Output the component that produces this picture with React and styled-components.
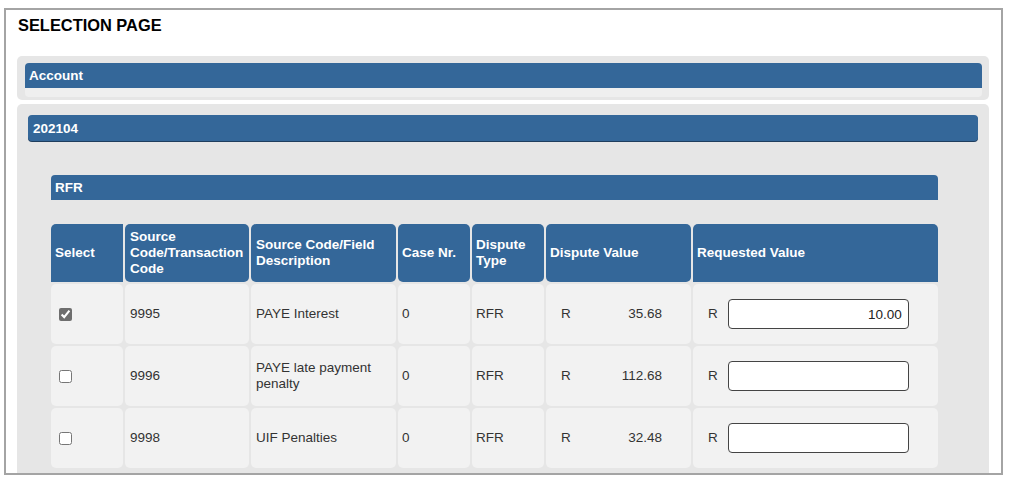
import React from "react";
import styled, { createGlobalStyle } from "styled-components";

const Global = createGlobalStyle`
  html, body { margin: 0; padding: 0; background: #fff; }
  body { font-family: "Liberation Sans", Arial, sans-serif; }
`;

const BLUE = "#346799";

const Frame = styled.div`
  box-sizing: border-box;
  margin: 8px 0 0 4px;
  width: 999px;
  height: 467px;
  border: 2px solid #a4a4a4;
  background: #fff;
  overflow: hidden;
  padding: 0 12px 0 11px;
`;

const Title = styled.h1`
  margin: 0;
  padding: 6px 0 0 1px;
  font-size: 16.4px;
  line-height: 18px;
  font-weight: bold;
  color: #000;
`;

const Panel = styled.div`
  background: #e6e6e6;
  border-radius: 5px;
  margin-top: ${(p) => p.$mt}px;
  padding: ${(p) => p.$pad};
`;

const Card = styled.div`
  background: #efefef;
  border-radius: 4px;
  padding-bottom: 9px;
`;

const Bar = styled.div`
  box-sizing: border-box;
  height: ${(p) => p.$h || 25}px;
  background: ${BLUE};
  color: #fff;
  font-weight: bold;
  font-size: 13.5px;
  display: flex;
  align-items: center;
  padding-left: ${(p) => p.$pl || 4}px;
  border-radius: ${(p) => p.$radius || "4px 4px 0 0"};
  box-shadow: ${(p) => (p.$shadow ? "0 1px 0 #1f3e5e" : "none")};
  margin: ${(p) => p.$margin || "0"};
`;

const Section = styled.div`
  margin: 34px 0 0 34px;
  width: 887px;
`;

const Grid = styled.div`
  margin-top: 24px;
  display: grid;
  grid-template-columns: 72px 124px 145px 72px 72px 145px 245px;
  grid-auto-rows: 60px;
  grid-template-rows: 58px;
  gap: 2px;
  font-size: 13.5px;
`;

const Head = styled.div`
  background: ${BLUE};
  color: #fff;
  font-weight: bold;
  line-height: 16px;
  display: flex;
  align-items: center;
  padding: 0 0 0 ${(p) => p.$pl || 4}px;
  white-space: nowrap;
  border-radius: ${(p) => p.$radius || "5px"};
`;

const Cell = styled.div`
  background: #f2f2f2;
  color: #333;
  line-height: 16px;
  border-radius: 5px;
  display: flex;
  align-items: center;
  white-space: nowrap;
  padding: ${(p) => p.$pad || "0 0 0 5px"};
  justify-content: ${(p) => p.$justify || "flex-start"};
`;

const Check = styled.input.attrs({ type: "checkbox" })`
  width: 13px;
  height: 13px;
  margin: 0 0 0 3px;
  accent-color: #6e6e6e;
`;

const Amount = styled.span`
  text-align: right;
`;

const Currency = styled.span`
  margin-right: 10px;
`;

const ValueInput = styled.input`
  box-sizing: border-box;
  width: 181px;
  height: 30px;
  border: 1.5px solid #444;
  border-radius: 4px;
  background: #fff;
  text-align: right;
  padding: 0 6px;
  font: 13.5px "Liberation Sans", Arial, sans-serif;
  color: #222;
  outline: none;
`;

const rows = [
  { checked: true, code: "9995", desc: ["PAYE Interest"], value: "35.68", req: "10.00" },
  { checked: false, code: "9996", desc: ["PAYE late payment", "penalty"], value: "112.68", req: "" },
  { checked: false, code: "9998", desc: ["UIF Penalties"], value: "32.48", req: "" },
];

const Lines = ({ lines }) =>
  lines.map((l, i) => (
    <React.Fragment key={i}>
      {i > 0 && <br />}
      {l}
    </React.Fragment>
  ));

export default function App() {
  return (
    <>
      <Global />
      <Frame>
        <Title>SELECTION PAGE</Title>
        <Panel $mt={22} $pad="7px 7px 3px 8px">
          <Card>
            <Bar>Account</Bar>
          </Card>
        </Panel>
        <Panel $mt={4} $pad="11px 0 30px 0">
          <Bar $h={26} $pl={5} $radius="4px" $shadow $margin="0 11px">
            202104
          </Bar>
          <Section>
            <Bar>RFR</Bar>
            <Grid>
              <Head $radius="5px 0 0 0">Select</Head>
              <Head $pl={5}>
                <span><Lines lines={["Source", "Code/Transaction", "Code"]} /></span>
              </Head>
              <Head $pl={5}>
                <span><Lines lines={["Source Code/Field", "Description"]} /></span>
              </Head>
              <Head>Case Nr.</Head>
              <Head>
                <span><Lines lines={["Dispute", "Type"]} /></span>
              </Head>
              <Head>Dispute Value</Head>
              <Head $radius="5px 5px 0 0">Requested Value</Head>
              {rows.map((r) => (
                <React.Fragment key={r.code}>
                  <Cell>
                    <Check defaultChecked={r.checked} />
                  </Cell>
                  <Cell>{r.code}</Cell>
                  <Cell>
                    <span><Lines lines={r.desc} /></span>
                  </Cell>
                  <Cell $pad="0 0 0 4px">0</Cell>
                  <Cell $pad="0 0 0 4px">RFR</Cell>
                  <Cell $pad="0 29px 0 15px" $justify="space-between">
                    <span>R</span>
                    <Amount>{r.value}</Amount>
                  </Cell>
                  <Cell $pad="0 0 0 15px">
                    <Currency>R</Currency>
                    <ValueInput defaultValue={r.req} />
                  </Cell>
                </React.Fragment>
              ))}
            </Grid>
          </Section>
        </Panel>
      </Frame>
    </>
  );
}
